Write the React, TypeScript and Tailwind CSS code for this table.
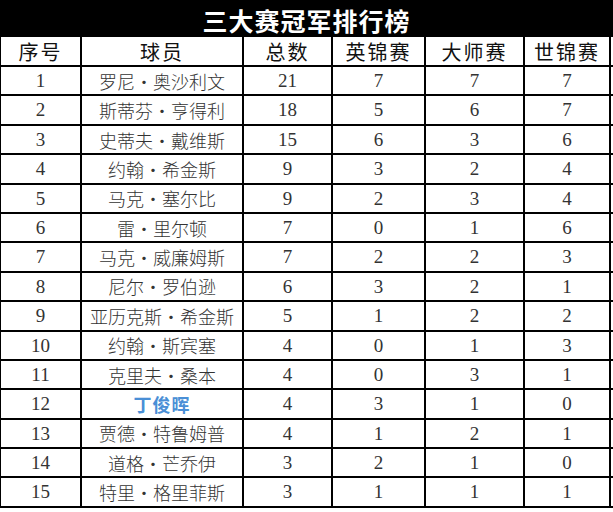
const rows: [number, string, number, number, number, number][] = [
  [1, "罗尼•奥沙利文", 21, 7, 7, 7],
  [2, "斯蒂芬•亨得利", 18, 5, 6, 7],
  [3, "史蒂夫•戴维斯", 15, 6, 3, 6],
  [4, "约翰•希金斯", 9, 3, 2, 4],
  [5, "马克•塞尔比", 9, 2, 3, 4],
  [6, "雷•里尔顿", 7, 0, 1, 6],
  [7, "马克•威廉姆斯", 7, 2, 2, 3],
  [8, "尼尔•罗伯逊", 6, 3, 2, 1],
  [9, "亚历克斯•希金斯", 5, 1, 2, 2],
  [10, "约翰•斯宾塞", 4, 0, 1, 3],
  [11, "克里夫•桑本", 4, 0, 3, 1],
  [12, "丁俊晖", 4, 3, 1, 0],
  [13, "贾德•特鲁姆普", 4, 1, 2, 1],
  [14, "道格•芒乔伊", 3, 2, 1, 0],
  [15, "特里•格里菲斯", 3, 1, 1, 1],
];

const cols = "grid grid-cols-[82px_162px_89px_93px_99px_86px]";
const cell = "flex items-center justify-center border-r-2 border-black";

export default function App() {
  return (
    <main className="h-[512px] w-[613px] overflow-hidden bg-white">
      <div className="flex h-[37px] items-center justify-center bg-black pt-1 font-['Noto_Sans_CJK_SC',sans-serif] text-[25px] font-bold tracking-[1px] text-white">
        三大赛冠军排行榜
      </div>

      <div className={`${cols} h-[30px] border-b-2 border-black font-['Noto_Sans_CJK_SC',sans-serif] text-[20px] tracking-[2px] text-[#111]`}>
        <div className={`${cell} border-l`}>序号</div>
        <div className={cell}>球员</div>
        <div className={cell}>总数</div>
        <div className={cell}>英锦赛</div>
        <div className={cell}>大师赛</div>
        <div className={cell}>世锦赛</div>
      </div>

      {rows.map(([no, name, total, uk, masters, world]) => (
        <div
          key={no}
          className={`${cols} h-[29.4px] border-b-2 border-black font-['Liberation_Serif','Noto_Sans_CJK_SC',serif] text-[19px] text-[#333]`}
        >
          <div className={`${cell} border-l`}>{no}</div>
          <div
            className={
              no === 12
                ? `${cell} font-['Noto_Sans_CJK_SC',sans-serif] text-[18px] font-bold tracking-[1px] text-[#4a8fd6]`
                : `${cell} font-['Noto_Sans_CJK_SC',sans-serif] text-[18px] font-light`
            }
          >
            {name}
          </div>
          <div className={cell}>{total}</div>
          <div className={cell}>{uk}</div>
          <div className={cell}>{masters}</div>
          <div className={cell}>{world}</div>
        </div>
      ))}
    </main>
  );
}
